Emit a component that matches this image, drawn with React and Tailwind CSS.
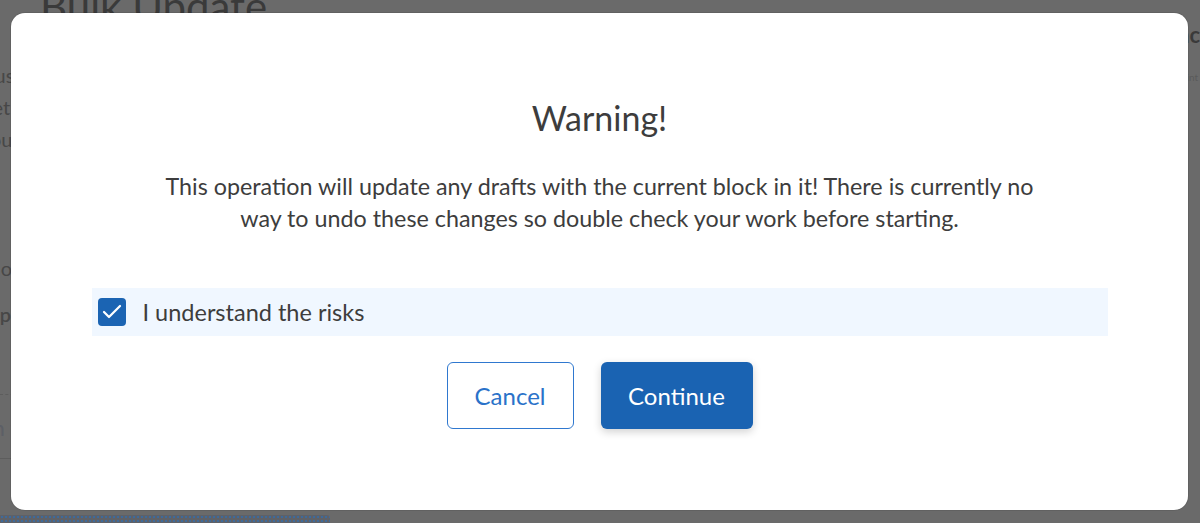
import { Check } from 'lucide-react';

function BackgroundPage() {
  return (
    <div className="h-full w-full text-[#3b3b3b]">
      <div className="pl-[40px] -mt-[18px] text-[42px] leading-[48px] text-[#3a3a3a]">Bulk Update</div>
      <div className="absolute right-[0px] top-[18px] text-[22px] font-bold text-[#3a3a3a]">Bac</div>
      <div className="absolute right-[2px] top-[70px] text-[10px] text-[#5a5a5a]">Hint</div>
      <div className="-ml-[40px] mt-[34px] space-y-[10px] text-[20px] leading-[22px] text-[#474747]">
        <div>Status</div>
        <div>Sheet Type</div>
        <div>Layout</div>
      </div>
      <div className="-ml-[60px] mt-[107px] space-y-[24px] text-[20px] leading-[22px] text-[#474747]">
        <div>Your block</div>
        <div className="font-semibold">Drafts per</div>
      </div>
      <div className="mt-[69px] w-[30px] border-t border-dashed border-[#5d5d5d]" />
      <div className="-ml-[60px] mt-[21px] text-[22px] leading-[24px] text-[#5c5f66]">Search for</div>
      <div className="mt-[18px] w-[30px] border-t border-[#5d5d5d]" />
    </div>
  );
}

export default function App() {
  return (
    <div className="relative h-[523px] w-[1200px] overflow-hidden bg-[#6a6a6a] font-['Lato','Liberation_Sans',sans-serif]">
      <BackgroundPage />
      <div className="absolute bottom-0 left-0 h-[8px] w-[330px] rounded-tr-[3px] bg-[radial-gradient(#3f6a9a_1px,#5e6168_1px)] bg-[length:4px_4px]" />

      <div className="absolute left-[11px] top-[13px] flex h-[497px] w-[1177px] flex-col items-center rounded-[14px] bg-white pt-[85px] shadow-[0_0_0_1px_rgba(0,0,0,0.08)]">
        <h1 className="text-[34px] leading-[40px] text-[#3d3d3d]">Warning!</h1>
        <p className="mt-[32px] w-[890px] text-center text-[23.3px] leading-[32px] text-[#3d3d3d]">
          This operation will update any drafts with the current block in it! There is currently no way to undo these
          changes so double check your work before starting.
        </p>

        <label className="mt-[54px] flex h-[48px] w-[1016px] items-center gap-[17px] bg-[#f0f7ff] pl-[6px]">
          <span className="flex h-[28px] w-[28px] items-center justify-center rounded-[4px] bg-[#1b64b3]">
            <Check className="h-[24px] w-[24px] text-white" strokeWidth={2.25} />
          </span>
          <span className="text-[23.5px] leading-[26px] text-[#3d3d3d]">I understand the risks</span>
        </label>

        <div className="mt-[26px] flex gap-[27px]">
          <button className="h-[67px] w-[127px] rounded-[6px] border-[1.5px] border-[#2f78cf] bg-white text-[24px] text-[#2a72c9]">
            Cancel
          </button>
          <button className="h-[67px] w-[152px] rounded-[6px] bg-[#1a63b2] text-[24px] text-white shadow-[0_3px_8px_rgba(0,0,0,0.18)]">
            Continue
          </button>
        </div>
      </div>
    </div>
  );
}
